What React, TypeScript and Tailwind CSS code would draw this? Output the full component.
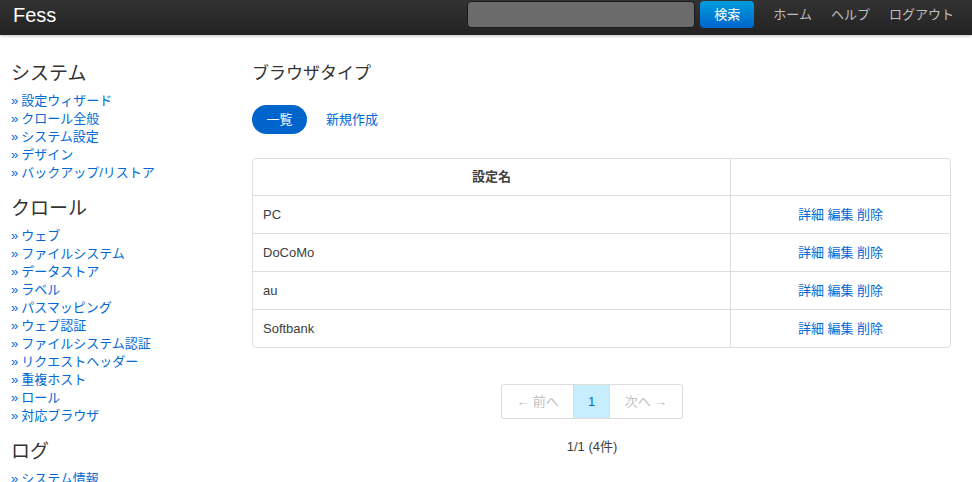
import React from "react";

const systemLinks = ["設定ウィザード", "クロール全般", "システム設定", "デザイン", "バックアップ/リストア"];
const crawlLinks = [
  "ウェブ",
  "ファイルシステム",
  "データストア",
  "ラベル",
  "パスマッピング",
  "ウェブ認証",
  "ファイルシステム認証",
  "リクエストヘッダー",
  "重複ホスト",
  "ロール",
  "対応ブラウザ",
];
const logLinks = ["システム情報"];
const rows = ["PC", "DoCoMo", "au", "Softbank"];

const jp = { fontFamily: '"Liberation Sans", "Noto Sans CJK JP", sans-serif' };

const SideGroup = ({ title, links, first }: { title: string; links: string[]; first?: boolean }) => (
  <div className={first ? "" : "mt-[15px]"}>
    <h3 className="text-[19px] leading-[23px] text-[#333]">{title}</h3>
    <ul className="mt-[7px]">
      {links.map(l => (
        <li key={l} className="text-[13px] leading-[18px] text-[#0069d6]">
          <span className="mr-[3px]">»</span>
          {l}
        </li>
      ))}
    </ul>
  </div>
);

const App = () => {
  return (
    <div className="w-[972px] h-[482px] overflow-hidden bg-white" style={jp}>
      <div className="h-[35px] flex items-center bg-gradient-to-b from-[#333] to-[#222] shadow-[0_1px_3px_rgba(0,0,0,0.25)]">
        <div className="pl-[13px] text-[20px] text-white leading-none pb-[5px]">Fess</div>
        <div className="ml-auto flex items-center pb-[6px]">
          <div className="w-[228px] h-[27px] rounded-[4px] bg-[#6b6b6b] border border-[#1a1a1a]" />
          <div className="ml-[5px] w-[54px] h-[27px] rounded-[4px] bg-gradient-to-b from-[#049cdb] to-[#0064cd] text-white text-[13px] flex items-center justify-center">
            検索
          </div>
          <div className="ml-[19px] flex gap-[19px] text-[13px] text-[#bfbfbf] pr-[18px]">
            <span>ホーム</span>
            <span>ヘルプ</span>
            <span>ログアウト</span>
          </div>
        </div>
      </div>

      <div className="flex">
        <div className="w-[252px] pl-[11px] pt-[27px]">
          <SideGroup title="システム" links={systemLinks} first />
          <SideGroup title="クロール" links={crawlLinks} />
          <SideGroup title="ログ" links={logLinks} />
        </div>

        <div className="w-[699px] pt-[28px]">
          <h2 className="text-[17px] leading-[22px] text-[#333]">ブラウザタイプ</h2>
          <div className="mt-[20px] flex items-center">
            <div className="w-[55px] h-[29px] rounded-full bg-[#0064cd] text-white text-[13px] flex items-center justify-center">
              一覧
            </div>
            <span className="ml-[19px] text-[13px] text-[#0069d6]">新規作成</span>
          </div>

          <table className="mt-[24px] w-full border-separate border-spacing-0 border border-[#ddd] rounded-[4px] text-[13px] text-[#404040]">
            <thead>
              <tr className="h-[36px]">
                <th className="w-[478px] font-bold text-center border-r border-[#ddd]">設定名</th>
                <th></th>
              </tr>
            </thead>
            <tbody>
              {rows.map(r => (
                <tr key={r} className="h-[38px]">
                  <td className="pl-[10px] border-t border-r border-[#ddd]">{r}</td>
                  <td className="text-center text-[#0069d6] border-t border-[#ddd]">
                    詳細 編集 削除
                  </td>
                </tr>
              ))}
            </tbody>
          </table>

          <div className="w-[680px]">
            <div className="mt-[36px] flex justify-center">
              <div className="flex h-[35px] border border-[#ddd] rounded-[3px] text-[13px]">
                <span className="w-[72px] flex items-center justify-center text-[#bfbfbf] border-r border-[#ddd]">← 前へ</span>
                <span className="w-[36px] flex items-center justify-center text-[#0069d6] bg-[#c7eeff] border-r border-[#ddd]">1</span>
                <span className="w-[72px] flex items-center justify-center text-[#bfbfbf]">次へ →</span>
              </div>
            </div>
            <div className="mt-[18px] text-center text-[13px] text-[#404040]">1/1 (4件)</div>
          </div>
        </div>
      </div>
    </div>
  );
};

export default App;
